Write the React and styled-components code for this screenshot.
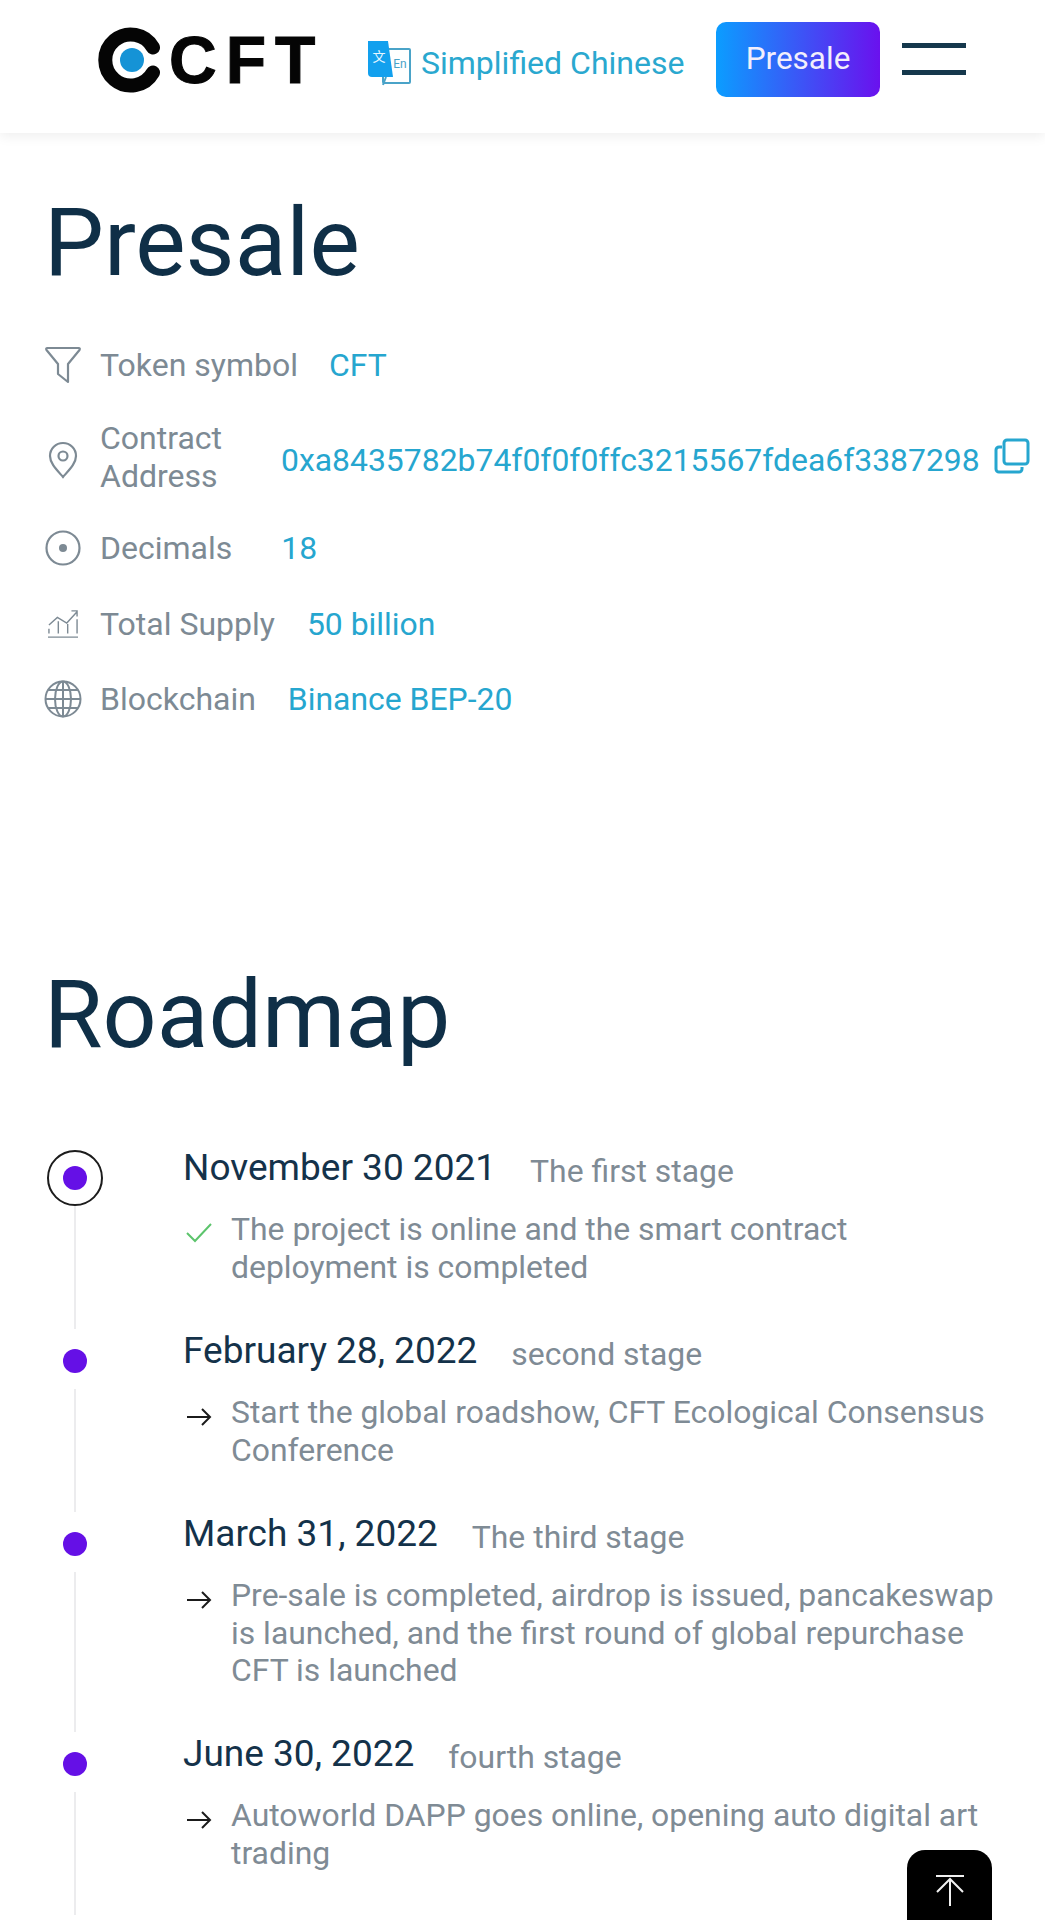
import React from "react";
import styled, { createGlobalStyle } from "styled-components";

const GlobalStyle = createGlobalStyle`
  html, body {
    margin: 0;
    padding: 0;
    height: 1920px;
    overflow: hidden;
    background: #fff;
    font-family: Roboto, "Liberation Sans", sans-serif;
  }
`;

const Page = styled.div`
  width: 1045px;
`;

const Header = styled.header`
  height: 133px;
  display: flex;
  align-items: center;
  padding-left: 98px;
  box-sizing: border-box;
  box-shadow: 0 3px 12px rgba(0, 0, 0, 0.07);
`;

const Logo = styled.div`
  display: flex;
  align-items: center;
  width: 217px;
  margin-top: -14px;
`;

const LogoMark = styled.svg`
  flex: none;
`;

const LogoText = styled.span`
  font-family: "Liberation Sans", sans-serif;
  font-weight: 700;
  font-size: 66px;
  line-height: 66px;
  letter-spacing: 9px;
  color: #050505;
  margin-left: 5px;
  -webkit-text-stroke: 1px #050505;
  white-space: nowrap;
`;

const Lang = styled.div`
  display: flex;
  align-items: center;
  margin-left: 52px;
  gap: 10px;
  color: #2aa8cf;
  font-size: 32px;
  width: 336px;
  margin-top: -8px;
`;

const PresaleButton = styled.button`
  width: 164px;
  height: 75px;
  border: 0;
  border-radius: 10px;
  background: linear-gradient(90deg, #0b9dff, #6a11ee);
  color: #f2eefc;
  font-family: inherit;
  font-size: 31.5px;
  margin-left: 13px;
  margin-top: -14px;
  padding: 0 0 3px;
`;

const Burger = styled.div`
  width: 64px;
  height: 32px;
  margin-left: 22px;
  margin-top: -15px;
  border-top: 5px solid #15384c;
  border-bottom: 5px solid #15384c;
  box-sizing: border-box;
`;

const Main = styled.main`
  padding: 0 0 0 44px;
`;

const Title = styled.h1`
  margin: 0;
  font-weight: 400;
  font-size: 95px;
  line-height: 108px;
  color: #0f2f47;
`;

const PresaleTitle = styled(Title)`
  padding-top: 56px;
`;

const RoadmapTitle = styled(Title)`
  padding-top: 231px;
`;

const InfoList = styled.div`
  margin-top: 30px;
  display: flex;
  flex-direction: column;
`;

const InfoRow = styled.div`
  display: flex;
  align-items: center;
  min-height: ${(p) => p.$h}px;
  font-size: 32px;
  line-height: 38px;
`;

const InfoIcon = styled.div`
  width: 38px;
  height: 38px;
  margin-right: 18px;
  flex: none;
  color: #7d8a94;
  display: flex;
  align-items: center;
  justify-content: center;
`;

const InfoLabel = styled.div`
  color: #7d8a94;
  width: ${(p) => (p.$w ? p.$w + "px" : "auto")};
  margin-top: ${(p) => (p.$w ? "-7px" : "0")};
  flex: none;
`;

const InfoValue = styled.div`
  color: #26a6cf;
  font-size: 31.9px;
  margin-left: ${(p) => p.$m}px;
  white-space: nowrap;
  display: flex;
  align-items: center;
`;

const CopyIcon = styled.svg`
  margin-left: 14px;
  margin-top: -8px;
`;

const Timeline = styled.div`
  margin-top: 81px;
`;

const Stage = styled.div`
  display: flex;
  height: ${(p) => p.$h}px;
`;

const Rail = styled.div`
  flex: none;
  display: flex;
  flex-direction: column;
  align-items: center;
  width: 60px;
  margin-left: 1px;
  margin-right: 78px;
`;

const Ring = styled.div`
  width: 56px;
  height: 56px;
  box-sizing: border-box;
  border-radius: 50%;
  border: ${(p) => (p.$active ? "2px solid #1c1c1c" : "0")};
  display: flex;
  align-items: center;
  justify-content: center;
  flex: none;
`;

const Dot = styled.div`
  width: 24px;
  height: 24px;
  border-radius: 50%;
  background: #6510e6;
`;

const RailLine = styled.div`
  width: 2px;
  flex: 1;
  background: #ececee;
  margin-bottom: 4px;
`;

const StageBody = styled.div`
  flex: 1;
  padding-right: 40px;
`;

const StageHead = styled.div`
  display: flex;
  align-items: flex-start;
  gap: 34px;
  height: 42px;
  margin-top: -3px;
`;

const StageDate = styled.span`
  font-size: 37px;
  line-height: 42px;
  color: #14324a;
`;

const StageName = styled.span`
  font-size: 31.9px;
  line-height: 42px;
  margin-top: 3px;
  color: #7f8b95;
`;

const StageDesc = styled.div`
  display: flex;
  margin-top: 22px;
  font-size: 31.9px;
  line-height: 37.5px;
  color: #7f8b95;
`;

const DescIcon = styled.div`
  width: 48px;
  flex: none;
  padding-top: 5px;
`;

const TopButton = styled.div`
  position: fixed;
  left: 907px;
  top: 1850px;
  width: 85px;
  height: 70px;
  background: #000;
  border-radius: 18px 18px 0 0;
  display: flex;
  justify-content: center;
  padding-top: 24px;
  box-sizing: border-box;
`;

const LangIcon = () => (
  <svg width="44" height="46" viewBox="0 0 44 46">
    <rect x="16" y="9" width="27" height="34" fill="#fff" stroke="#4aa3c8" strokeWidth="2" rx="1" />
    <path d="M1 1h20l5 36H5a4 4 0 0 1-4-4z" fill="#12a0ee" />
    <path d="M19 37l-3 8" stroke="#4aa3c8" strokeWidth="2" />
    <text x="12" y="21" fontSize="13" fill="#e6f6ff" textAnchor="middle" fontFamily="Noto Sans CJK SC, sans-serif">文</text>
    <text x="33" y="28" fontSize="12" fill="#4aa3c8" textAnchor="middle" fontFamily="Roboto, sans-serif">En</text>
  </svg>
);

const Arrow = () => (
  <svg width="30" height="24" viewBox="0 0 30 24" fill="none" stroke="#1b1b1b" strokeWidth="2">
    <path d="M4 13h23M19 5l8 8-8 8" />
  </svg>
);

const Check = () => (
  <svg width="30" height="24" viewBox="0 0 30 24" fill="none" stroke="#5cc46c" strokeWidth="2">
    <path d="M4 12l8 8L28 3" />
  </svg>
);

const icons = {
  filter: (
    <svg width="36" height="38" viewBox="0 0 36 38" fill="none" stroke="#7d8a94" strokeWidth="2.2" strokeLinejoin="round">
      <path d="M2 2h32c1 0 1 1 .5 2L23 18v18L13 28V18L1.500 4C1 3 1 2 2 2z" />
    </svg>
  ),
  pin: (
    <svg width="30" height="38" viewBox="0 0 30 38" fill="none" stroke="#7d8a94" strokeWidth="2.2">
      <path d="M15 36C8 28 2 22 2 15a13 13 0 0 1 26 0c0 7-6 13-13 21z" />
      <circle cx="15" cy="15" r="4.500" />
    </svg>
  ),
  target: (
    <svg width="36" height="36" viewBox="0 0 36 36" fill="none" stroke="#7d8a94" strokeWidth="2.2">
      <circle cx="18" cy="18" r="16.500" />
      <circle cx="18" cy="18" r="4" fill="#7d8a94" stroke="none" />
    </svg>
  ),
  chart: (
    <svg width="32" height="30" viewBox="0 0 34 32" fill="none" stroke="#7d8a94" strokeWidth="1.500">
      <path d="M1 30h32M2 26v-5M12 26V13M22 26V16M32 26V11M2 17l9-8 10 6L32 3M26 2h6v6" />
    </svg>
  ),
  globe: (
    <svg width="38" height="38" viewBox="0 0 38 38" fill="none" stroke="#7d8a94" strokeWidth="2">
      <circle cx="19" cy="19" r="17.500" />
      <ellipse cx="19" cy="19" rx="8" ry="17.500" />
      <path d="M19 1.500v35M1.500 19h35M4 10h30M4 28h30" />
    </svg>
  ),
};

const info = [
  { icon: "filter", label: "Token symbol", value: "CFT", h: 76, m: 31 },
  { icon: "pin", label: "Contract Address", value: "0xa8435782b74f0f0f0ffc3215567fdea6f3387298", h: 114, w: 138, m: 43, copy: true },
  { icon: "target", label: "Decimals", value: "18", h: 62, m: 49 },
  { icon: "chart", label: "Total Supply", value: "50 billion", h: 89, m: 32 },
  { icon: "globe", label: "Blockchain", value: "Binance BEP-20", h: 62, m: 32 },
];

const stages = [
  { date: "November 30 2021", name: "The first stage", desc: "The project is online and the smart contract deployment is completed", done: true, h: 183 },
  { date: "February 28, 2022", name: "second stage", desc: "Start the global roadshow, CFT Ecological Consensus Conference", h: 183 },
  { date: "March 31, 2022", name: "The third stage", desc: "Pre-sale is completed, airdrop is issued, pancakeswap is launched, and the first round of global repurchase CFT is launched", h: 220 },
  { date: "June 30, 2022", name: "fourth stage", desc: "Autoworld DAPP goes online, opening auto digital art trading", h: 183 },
];

function App() {
  return (
    <Page>
      <GlobalStyle />
      <Header>
        <Logo>
          <LogoMark width="66" height="66" viewBox="0 0 66 66">
            <path d="M55 20.500A25.500 25.500 0 1 0 55 45.500" fill="none" stroke="#050505" strokeWidth="14" strokeLinecap="round" />
            <circle cx="34" cy="33" r="12" fill="#1593d6" />
          </LogoMark>
          <LogoText>CFT</LogoText>
        </Logo>
        <Lang>
          <LangIcon />
          <span>Simplified Chinese</span>
        </Lang>
        <PresaleButton>Presale</PresaleButton>
        <Burger />
      </Header>
      <Main>
        <PresaleTitle>Presale</PresaleTitle>
        <InfoList>
          {info.map((row) => (
            <InfoRow key={row.label} $h={row.h}>
              <InfoIcon>{icons[row.icon]}</InfoIcon>
              <InfoLabel $w={row.w}>{row.label}</InfoLabel>
              <InfoValue $m={row.m}>
                {row.value}
                {row.copy && (
                  <CopyIcon width="36" height="36" viewBox="0 0 36 36" fill="none" stroke="#26a6cf" strokeWidth="3">
                    <rect x="10" y="2" width="24" height="24" rx="3" />
                    <path d="M8 9H5a3 3 0 0 0-3 3v19a3 3 0 0 0 3 3h20a3 3 0 0 0 3-3v-2" />
                  </CopyIcon>
                )}
              </InfoValue>
            </InfoRow>
          ))}
        </InfoList>
        <RoadmapTitle>Roadmap</RoadmapTitle>
        <Timeline>
          {stages.map((s) => (
            <Stage key={s.date} $h={s.h}>
              <Rail>
                <Ring $active={s.done}>
                  <Dot />
                </Ring>
                <RailLine />
              </Rail>
              <StageBody>
                <StageHead>
                  <StageDate>{s.date}</StageDate>
                  <StageName>{s.name}</StageName>
                </StageHead>
                <StageDesc>
                  <DescIcon>{s.done ? <Check /> : <Arrow />}</DescIcon>
                  <div>{s.desc}</div>
                </StageDesc>
              </StageBody>
            </Stage>
          ))}
        </Timeline>
      </Main>
      <TopButton>
        <svg width="32" height="32" viewBox="0 0 32 32" fill="none" stroke="#f0f0f0" strokeWidth="2">
          <path d="M2 2h28M16 5v27M3 18L16 5l13 13" />
        </svg>
      </TopButton>
    </Page>
  );
}

export default App;
